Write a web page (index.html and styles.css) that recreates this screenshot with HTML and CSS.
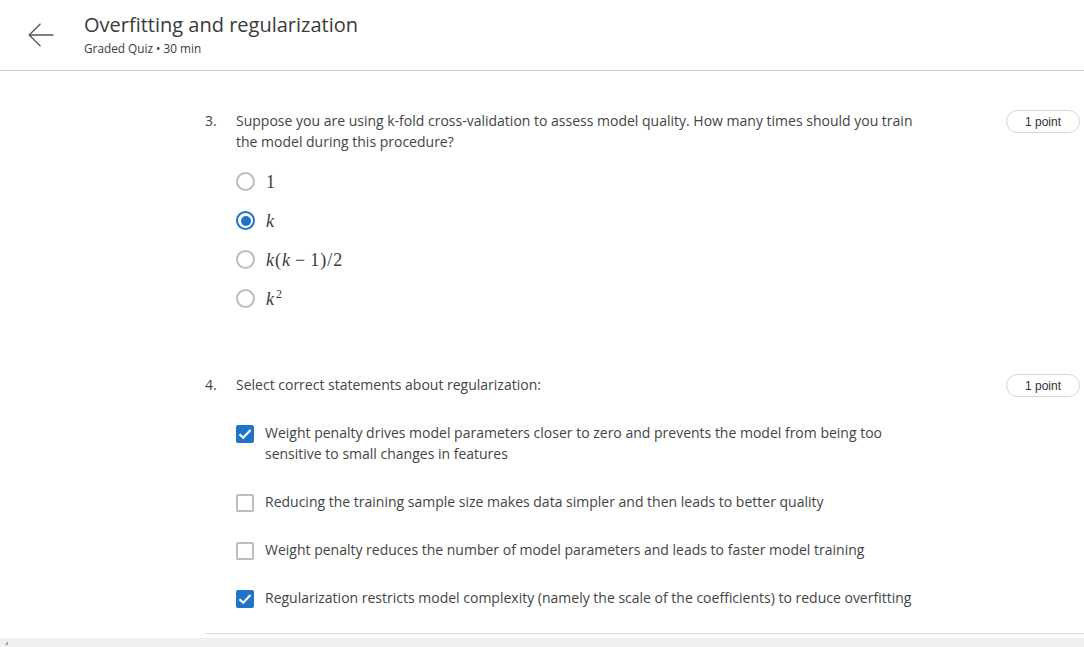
FILE: index.html
```html
<!DOCTYPE html>
<html lang="en">
<head>
<meta charset="utf-8">
<title>Overfitting and regularization</title>
<link rel="stylesheet" href="styles.css">
</head>
<body>
<header class="top">
  <button class="back" aria-label="Back">
    <svg width="26" height="24" viewBox="0 0 26 24"><path d="M12.5 0.8 L1.2 12 L12.5 23.2 M1.2 12 H25.5" fill="none" stroke="#555" stroke-width="1.3"/></svg>
  </button>
  <div class="titles">
    <h1 class="title">Overfitting and regularization</h1>
    <div class="sub">Graded Quiz • 30 min</div>
  </div>
</header>
<main class="page">
  <div class="quiz">
    <section class="q q3">
      <div class="num">3.</div>
      <div class="body">
        <p class="prompt">Suppose you are using k-fold cross-validation to assess model quality. How many times should you train the model during this procedure?</p>
        <ul class="opts">
          <li class="opt"><span class="radio"></span><span class="math"><span class="n">1</span></span></li>
          <li class="opt"><span class="radio on"></span><span class="math"><i>k</i></span></li>
          <li class="opt"><span class="radio"></span><span class="math"><i>k</i>(<i>k</i><span class="minus">−</span>1)/2</span></li>
          <li class="opt"><span class="radio"></span><span class="math"><i>k</i><sup>2</sup></span></li>
        </ul>
      </div>
      <span class="pts">1 point</span>
    </section>
    <section class="q q4">
      <div class="num">4.</div>
      <div class="body">
        <p class="prompt">Select correct statements about regularization:</p>
        <ul class="checks">
          <li class="chk"><span class="box on"><svg width="14" height="12" viewBox="0 0 14 12"><path d="M1.5 6.2 L5.2 9.8 L12.5 2" fill="none" stroke="#fff" stroke-width="2.2"/></svg></span><span class="ctext">Weight penalty drives model parameters closer to zero and prevents the model from being too sensitive to small changes in features</span></li>
          <li class="chk"><span class="box"></span><span class="ctext">Reducing the training sample size makes data simpler and then leads to better quality</span></li>
          <li class="chk"><span class="box"></span><span class="ctext">Weight penalty reduces the number of model parameters and leads to faster model training</span></li>
          <li class="chk"><span class="box on"><svg width="14" height="12" viewBox="0 0 14 12"><path d="M1.5 6.2 L5.2 9.8 L12.5 2" fill="none" stroke="#fff" stroke-width="2.2"/></svg></span><span class="ctext">Regularization restricts model complexity (namely the scale of the coefficients) to reduce overfitting</span></li>
        </ul>
      </div>
      <span class="pts">1 point</span>
    </section>
  </div>
</main>
<div class="hscroll"><span class="arrow"></span></div>
</body>
</html>
```

FILE: styles.css
```css
* { box-sizing: border-box; }
html, body { margin: 0; padding: 0; }
body {
  width: 1084px;
  height: 647px;
  overflow: hidden;
  background: #fff;
  font-family: "Open Sans", "Liberation Sans", sans-serif;
  color: #444;
}
.top {
  height: 71px;
  display: flex;
  align-items: flex-start;
  padding: 12px 0 0 28px;
  border-bottom: 1px solid #c8c8c8;
}
.back {
  border: 0;
  background: none;
  padding: 0;
  margin: 11px 0 0 0;
  width: 26px;
  height: 24px;
  display: block;
}
.back svg { display: block; }
.titles { margin-left: 30px; }
.title {
  margin: 0;
  font-size: 20px;
  line-height: 26px;
  font-weight: 400;
  color: #3a3a3a;
}
.sub {
  font-size: 11.8px;
  line-height: 16px;
  color: #3a3a3a;
  margin-top: 2px;
}
.page {
  padding: 39px 0 0 205px;
}
.quiz {
  border-bottom: 1px solid #dcdcdc;
  padding-bottom: 25px;
}
.q {
  display: flex;
  align-items: flex-start;
  padding-right: 4px;
}
.q4 { margin-top: 56px; }
.num {
  width: 31px;
  flex: none;
  font-size: 14px;
  line-height: 21px;
}
.body { width: 690px; flex: none; }
.prompt {
  margin: 0;
  font-size: 14px;
  line-height: 21px;
}
.pts {
  margin-left: auto;
  margin-top: 0;
  width: 74px;
  height: 23px;
  border: 1px solid #d6d6d6;
  border-radius: 12px;
  font-family: "Liberation Sans", Arial, sans-serif;
  font-size: 12px;
  line-height: 22px;
  text-align: center;
  color: #333;
}
.opts, .checks {
  list-style: none;
  margin: 0;
  padding: 0;
}
.opts { margin-top: 10px; }
.opt {
  display: flex;
  align-items: center;
  height: 39px;
}
.radio {
  width: 19px;
  height: 19px;
  border-radius: 50%;
  border: 2px solid #bdbdbd;
  flex: none;
  margin-right: 11px;
  position: relative;
}
.radio.on {
  border: 2px solid #1f73c9;
}
.radio.on::after {
  content: "";
  position: absolute;
  left: 2.5px;
  top: 2.5px;
  width: 10px;
  height: 10px;
  border-radius: 50%;
  background: #1f73c9;
}
.math {
  font-family: "Liberation Serif", "Times New Roman", serif;
  font-size: 18px;
  letter-spacing: 1px;
  color: #3a3a3a;
  line-height: 20px;
}
.math i { font-style: italic; }
.minus { margin: 0 4px; }
.math sup {
  font-size: 12px;
  vertical-align: 7px;
  line-height: 0;
  margin-left: 1px;
}
.checks { margin-top: 27px; }
.chk {
  display: flex;
  align-items: flex-start;
  margin-bottom: 27px;
}
.chk:last-child { margin-bottom: 0; }
.box {
  width: 18px;
  height: 18px;
  flex: none;
  border: 2px solid #bdbdbd;
  border-radius: 2px;
  margin: 3px 11px 0 0;
  display: flex;
  align-items: center;
  justify-content: center;
}
.box.on {
  background: #1f73c9;
  border-color: #1f73c9;
}
.box svg { display: block; }
.ctext {
  font-size: 14px;
  line-height: 21px;
  max-width: 660px;
}
.hscroll {
  margin-top: 4px;
  height: 9px;
  background: #f0f0f0;
  position: relative;
}
.hscroll .arrow {
  position: absolute;
  left: 5px;
  top: 3px;
  width: 0;
  height: 0;
  border-left: 3px solid transparent;
  border-bottom: 4px solid #a3a3a3;
}
```
